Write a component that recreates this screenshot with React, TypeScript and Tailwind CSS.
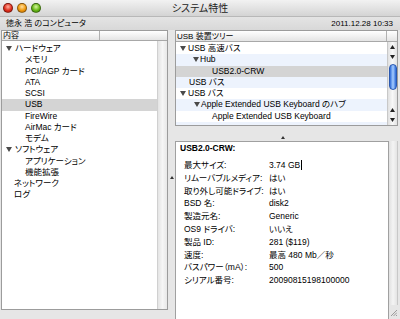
const font = "font-['Liberation_Sans','Noto_Sans_CJK_JP',sans-serif] [font-feature-settings:'palt']";

function Tri({ className = "" }: { className?: string }) {
  return (
    <svg width="6" height="5" viewBox="0 0 6 5" className={className}>
      <polygon points="0,0 6,0 3,5" fill="#4a4a4a" />
    </svg>
  );
}

function Arrow({ up }: { up?: boolean }) {
  return (
    <div className="h-[10px] flex items-center justify-center">
      <svg width="5" height="4" viewBox="0 0 5 4">
        <polygon points={up ? "0,4 5,4 2.5,0" : "0,0 5,0 2.5,4"} fill="#222" />
      </svg>
    </div>
  );
}

function Light({ c }: { c: string }) {
  return <div className={"w-[10px] h-[10px] rounded-full border border-black/40 " + c} />;
}

const details: [string, string][] = [
  ["最大サイズ:", "3.74 GB"],
  ["リムーバブルメディア:", "はい"],
  ["取り外し可能ドライブ:", "はい"],
  ["BSD 名:", "disk2"],
  ["製造元名:", "Generic"],
  ["OS9 ドライバ:", "いいえ"],
  ["製品 ID:", "281 ($119)"],
  ["速度:", "最高 480 Mb／秒"],
  ["バスパワー（mA）:", "500"],
  ["シリアル番号:", "20090815198100000"],
];

export default function App() {
  return (
    <div className={"w-[400px] h-[319px] overflow-hidden bg-[#e6e6e6] text-black text-[8.5px] " + font}>
      {/* title bar */}
      <div className="h-[17px] grid grid-cols-[1fr_auto_1fr] items-center bg-linear-to-b from-[#f2f2f2] to-[#d4d4d4] border-b border-[#b8b8b8]">
        <div className="flex gap-[4px] pl-[3px]">
          <Light c="bg-[radial-gradient(circle_at_50%_35%,#ffb0a0,#e0301f_55%,#a01208)]" />
          <Light c="bg-[radial-gradient(circle_at_50%_35%,#ffe0a0,#f09a10_55%,#b06000)]" />
          <Light c="bg-[radial-gradient(circle_at_50%_35%,#d8f5a0,#68b818_55%,#3a7a08)]" />
        </div>
        <div className="text-[10px] text-[#222]">システム特性</div>
        <div />
      </div>
      {/* info strip */}
      <div className="h-[13px] flex items-center justify-between pl-[6px] pr-[7px] text-[8px] bg-linear-to-b from-[#e4e4e4] to-[#d8d8d8]">
        <span>徳永 浩 のコンピュータ</span>
        <span>2011.12.28 10:33</span>
      </div>

      <div className="flex h-[289px]">
        {/* left list */}
        <div className="ml-[1px] w-[167px] h-[280px] border border-[#9c9c9c] bg-white flex flex-col">
          <div className="h-[10px] flex border-b border-[#a8a8a8] bg-linear-to-b from-[#ffffff] to-[#e4e4e4] leading-[10px] text-[8px]">
            <div className="w-[98px] pl-[1px] border-r border-[#b0b0b0]">内容</div>
            <div className="flex-1" />
          </div>
          <div className="flex-1 flex">
            <div className="flex-1 pt-[2px] leading-[11.25px]">
              <div className="h-[11.25px] flex items-center pl-[4px] gap-[3px]"><Tri />ハードウェア</div>
              <div className="h-[11.25px] pl-[23px]">メモリ</div>
              <div className="h-[11.25px] pl-[23px]">PCI/AGP カード</div>
              <div className="h-[11.25px] pl-[23px]">ATA</div>
              <div className="h-[11.25px] pl-[23px]">SCSI</div>
              <div className="h-[11.25px] pl-[23px] bg-[#d4d4d4]">USB</div>
              <div className="h-[11.25px] pl-[23px]">FireWire</div>
              <div className="h-[11.25px] pl-[23px]">AirMac カード</div>
              <div className="h-[11.25px] pl-[23px]">モデム</div>
              <div className="h-[11.25px] flex items-center pl-[4px] gap-[3px]"><Tri />ソフトウェア</div>
              <div className="h-[11.25px] pl-[23px]">アプリケーション</div>
              <div className="h-[11.25px] pl-[23px]">機能拡張</div>
              <div className="h-[11.25px] pl-[12px]">ネットワーク</div>
              <div className="h-[11.25px] pl-[12px]">ログ</div>
            </div>
            <div className="w-[10px] bg-linear-to-r from-[#e4e4e4] via-[#f6f6f6] to-[#e8e8e8] border-l border-[#d0d0d0]" />
          </div>
        </div>

        {/* vertical splitter */}
        <div className="w-[7px] flex flex-col items-center justify-center pt-[6px]">
          <svg width="4" height="3" viewBox="0 0 4 3">
            <polygon points="0,3 4,3 2,0" fill="#333" />
          </svg>
        </div>

        {/* right column */}
        <div className="w-[223px] flex flex-col">
          <div className="h-[96px] border border-[#9c9c9c] bg-white flex flex-col">
            <div className="h-[11px] flex border-b border-[#a8a8a8] bg-linear-to-b from-[#ffffff] to-[#e4e4e4] leading-[11px] text-[8px]">
              <div className="flex-1 pl-[1px] border-r border-[#b0b0b0]">USB 装置ツリー</div>
              <div className="w-[10px]" />
            </div>
            <div className="flex-1 flex overflow-hidden">
              <div className="flex-1 pt-[1px] leading-[11.25px]">
                <div className="h-[11.25px] flex items-center pl-[4px] gap-[2px]"><Tri />USB 高速バス</div>
                <div className="h-[11.25px] flex items-center pl-[17px] gap-[1px] bg-[#edf3fd]"><Tri />Hub</div>
                <div className="h-[11.25px] pl-[36px] bg-[#d4d4d4]">USB2.0-CRW</div>
                <div className="h-[11.25px] pl-[13px] bg-[#edf3fd]">USB バス</div>
                <div className="h-[11.25px] flex items-center pl-[4px] gap-[2px]"><Tri />USB バス</div>
                <div className="h-[11.25px] flex items-center pl-[18px] gap-[1px] bg-[#edf3fd]"><Tri />Apple Extended USB Keyboard のハブ</div>
                <div className="h-[11.25px] pl-[36px]">Apple Extended USB Keyboard</div>
                <div className="h-[11.25px] bg-[#edf3fd]" />
              </div>
              <div className="w-[10px] flex flex-col border-l border-[#c8c8c8] bg-linear-to-r from-[#e0e0e0] via-[#f8f8f8] to-[#e2e2e2]">
                <Arrow up />
                <Arrow />
                <div className="mx-auto mt-[2px] w-[8px] h-[26px] rounded-full border border-[#2a58b0] bg-linear-to-r from-[#2e6ad8] via-[#a6ccff] to-[#2a66d6]" />
                <div className="flex-1" />
                <Arrow up />
                <Arrow />
              </div>
            </div>
          </div>

          {/* horizontal splitter */}
          <div className="h-[15px] flex items-center justify-center pt-[7px] pr-[7px]">
            <svg width="4" height="3" viewBox="0 0 4 3">
              <polygon points="0,3 4,3 2,0" fill="#333" />
            </svg>
          </div>

          <div className="flex flex-1">
            <div className="w-[214px] border border-[#a0a0a0] border-b-0 bg-white pt-[1px]">
              <div className="h-[10px] leading-[10px] pl-[4px] font-bold">USB2.0-CRW:</div>
              <div className="pt-[6px]">
                {details.map(([k, v], i) => (
                  <div key={i} className="h-[12.8px] leading-[12.8px] flex pl-[8px]">
                    <div className="w-[85px]">{k}</div>
                    <div className="flex items-center">
                      {v}
                      {i === 0 && <span className="ml-[1px] w-px h-[10px] bg-black" />}
                    </div>
                  </div>
                ))}
              </div>
            </div>
            <div className="w-[9px] flex flex-col">
              <div className="flex-1 bg-linear-to-r from-[#e0e0e0] via-[#f4f4f4] to-[#e4e4e4] border-r border-[#c8c8c8]" />
              <div className="h-[14px] flex items-center justify-center">
                <svg width="7" height="7" viewBox="0 0 7 7">
                  <path d="M1 7 L7 1 M3.5 7 L7 3.5 M6 7 L7 6" stroke="#888" strokeWidth="0.8" />
                </svg>
              </div>
            </div>
          </div>
        </div>
      </div>
    </div>
  );
}
